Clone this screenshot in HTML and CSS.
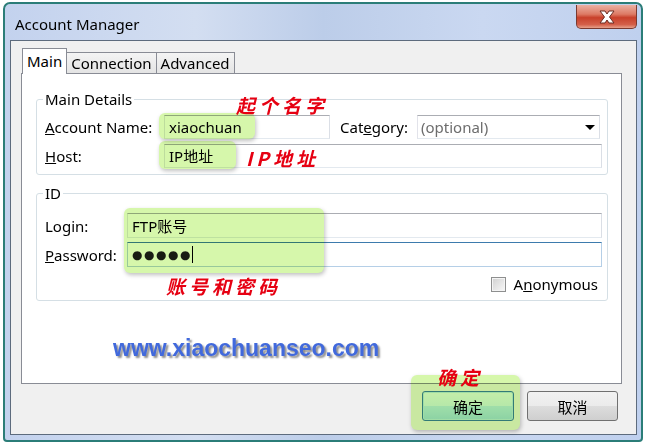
FILE: index.html
```html
<!DOCTYPE html>
<html>
    <head>
        <meta charset="UTF-8">
        <title>Account Manager</title>
        <link rel="stylesheet" href="styles.css">
    </head>
    <body>
        <div class="window">
            <div class="titlebar">
                <span class="title">Account Manager</span>
                <button class="close" title="Close">
                    <svg width="22" height="16" viewBox="0 0 22 16">
                        <path d="M4 2 L9 2 L11 5 L13 2 L18 2 L13.5 8 L18 14 L13 14 L11 11 L9 14 L4 14 L8.5 8 Z" fill="#fff" stroke="#6b2c22" stroke-width="1" stroke-linejoin="round"/>
                    </svg>
                </button>
            </div>

            <div class="client">
                <div class="tabs">
                    <span class="tab active">Main</span>
                    <span class="tab">Connection</span>
                    <span class="tab">Advanced</span>
                </div>

                <div class="panel">
                    <fieldset class="group main-group">
                        <legend>Main Details</legend>
                        <div class="row">
                            <label class="lbl"><u>A</u>ccount Name:</label>
                            <div class="field name-field">xiaochuan</div>
                            <label class="lbl cat-lbl">Cat<u>e</u>gory:</label>
                            <div class="field select">
                                <span class="placeholder">(optional)</span>
                                <span class="arrow"></span>
                            </div>
                        </div>
                        <div class="row">
                            <label class="lbl"><u>H</u>ost:</label>
                            <div class="field grow">IP地址</div>
                        </div>
                    </fieldset>

                    <fieldset class="group id-group">
                        <legend>ID</legend>
                        <div class="row">
                            <label class="lbl">Login:</label>
                            <div class="field grow">FTP账号</div>
                        </div>
                        <div class="row">
                            <label class="lbl"><u>P</u>assword:</label>
                            <div class="field grow focused"><span class="dots">●●●●●</span><span class="caret"></span></div>
                        </div>
                        <div class="check-row">
                            <span class="checkbox"></span>
                            <label>A<u>n</u>onymous</label>
                        </div>
                    </fieldset>

                    <div class="watermark">www.xiaochuanseo.com</div>
                </div>

                <div class="buttons">
                    <button class="btn default">确定</button>
                    <button class="btn">取消</button>
                </div>
            </div>
        </div>

        <!-- highlight marks and notes drawn over the dialog -->
        <div class="mark mark-name"></div>
        <div class="mark mark-host"></div>
        <div class="mark mark-login"></div>
        <div class="mark mark-ok"></div>

        <span class="note note-name">起个名字</span>
        <span class="note note-ip">IP地址</span>
        <span class="note note-acct">账号和密码</span>
        <span class="note note-ok">确定</span>
    </body>
</html>
```

FILE: styles.css
```css
body {
    margin: 0;
    width: 649px;
    height: 448px;
    position: relative;
    overflow: hidden;
    background: #fff;
    font-family: "Noto Sans", "Noto Sans CJK SC", sans-serif;
    font-size: 15px;
    color: #000;
}

.window {
    margin: 2px 0 0 3px;
    width: 640px;
    height: 440px;
    box-sizing: border-box;
    border: 2px solid #2b7d78;
    border-radius: 7px 7px 4px 4px;
    padding: 0 4px 5px 5px;
    display: flex;
    flex-direction: column;
    background: linear-gradient(to right, #c3d2ee 0%, #d3def1 30%, #bccde9 50%, #cad8f1 75%, #bfd0ee 100%);
}

.titlebar {
    height: 36px;
    flex: none;
    display: flex;
    justify-content: space-between;
    align-items: flex-start;
}

.title {
    margin: 10px 0 0 5px;
    line-height: 20px;
}

.close {
    margin-top: 1px;
    width: 61px;
    height: 24px;
    padding: 0;
    border: 1px solid #7a3a30;
    border-top: none;
    border-radius: 0 0 5px 5px;
    background: linear-gradient(#eab0a2 0%, #dd7a64 40%, #c8402a 55%, #d4604a 85%, #e7a08a 100%);
    display: flex;
    align-items: center;
    justify-content: center;
}

.client {
    flex: 1;
    border: 1px solid #5d6b7d;
    background: #f0f0f0;
    display: flex;
    flex-direction: column;
}

.tabs {
    height: 32px;
    box-sizing: border-box;
    padding: 7px 0 0 11px;
    display: flex;
    align-items: flex-end;
}

.tab {
    height: 20px;
    line-height: 20px;
    padding: 0 4px;
    border: 1px solid #898c95;
    border-bottom: none;
    margin-left: -1px;
    background: linear-gradient(#f4f4f4, #e4e4e4);
}

.tab.active {
    height: 25px;
    line-height: 25px;
    margin: 0 0 -1px 0;
    background: #fff;
    position: relative;
    z-index: 1;
}

.panel {
    margin-left: 10px;
    width: 601px;
    height: 311px;
    box-sizing: border-box;
    border: 1px solid #898c95;
    background: #fff;
    padding: 16px 0 0 14px;
}

.group {
    width: 572px;
    min-width: 0;
    box-sizing: border-box;
    margin: 0;
    border: 1px solid #d5dfe5;
    border-radius: 3px;
}

.group legend {
    padding: 0 2px;
    margin-left: -2px;
    line-height: 18px;
}

.main-group {
    padding: 7px 5px 6px 8px;
}

.id-group {
    margin-top: 9px;
    padding: 11px 5px 8px 8px;
}

.row {
    display: flex;
    align-items: center;
    height: 24px;
}

.row + .row {
    margin-top: 5px;
}

.id-group .row {
    height: 25px;
}

.id-group .row + .row {
    margin-top: 4px;
}

.lbl {
    width: 119px;
    flex: none;
}

.id-group .lbl {
    width: 82px;
}

.cat-lbl {
    width: 77px;
    margin-left: 10px;
}

.field {
    height: 100%;
    box-sizing: border-box;
    border: 1px solid;
    border-color: #abadb3 #dbdfe6 #e3e9ef #e2e3ea;
    padding: 0 4px;
    line-height: 22px;
    background: #fff;
    display: flex;
    align-items: center;
}

.name-field {
    width: 166px;
}

.grow {
    flex: 1;
}

.select {
    width: 183px;
    justify-content: space-between;
    padding: 0 4px 0 3px;
}

.placeholder {
    color: #6d6d6d;
}

.arrow {
    width: 0;
    height: 0;
    border-left: 5px solid transparent;
    border-right: 5px solid transparent;
    border-top: 5px solid #000;
}

.focused {
    border-color: #3d7bad #b5cfe7 #b5cfe7 #b5cfe7;
}

.dots {
    font-family: "DejaVu Sans", sans-serif;
    font-size: 12px;
    letter-spacing: 1.5px;
    color: #1c1c1c;
}

.caret {
    width: 1px;
    height: 17px;
    margin-left: 0;
    background: #000;
}

.check-row {
    margin-top: 9px;
    height: 16px;
    padding-right: 4px;
    display: flex;
    justify-content: flex-end;
    align-items: center;
    gap: 8px;
}

.checkbox {
    width: 13px;
    height: 13px;
    border: 1px solid #8e8f8f;
    background: linear-gradient(135deg, #d0d0d0, #f8f8f8);
    box-shadow: inset 0 0 0 1px #f4f4f4;
}

.watermark {
    margin: 33px 0 0 77px;
    font-family: "Liberation Sans", Arial, sans-serif;
    font-weight: bold;
    font-size: 23px;
    line-height: 29px;
    color: #4169dc;
    text-shadow: 2px 2px 2px rgba(0, 0, 0, 0.45);
}

.buttons {
    display: flex;
    justify-content: flex-end;
    gap: 13px;
    padding: 7px 18px 0 0;
}

.btn {
    width: 91px;
    height: 30px;
    border: 1px solid #707070;
    border-radius: 3px;
    font-family: "Noto Sans CJK SC", sans-serif;
    font-size: 15px;
    color: #000;
    background: linear-gradient(#f2f2f2 0%, #ebebeb 50%, #dddddd 50%, #cfcfcf 100%);
}

.btn.default {
    width: 92px;
    border-color: #3c7fb1;
    box-shadow: inset 0 0 0 1px #bfe5f7;
    background: linear-gradient(#eaf6fd 0%, #d9f0fc 50%, #bee6fd 50%, #a7d9f5 100%);
}

.mark {
    position: absolute;
    background: #d6f7ab;
    mix-blend-mode: multiply;
    border-radius: 6px;
    box-shadow: 1px 2px 4px rgba(0, 0, 0, 0.25);
}

.mark-name {
    left: 159px;
    top: 113px;
    width: 96px;
    height: 26px;
}

.mark-host {
    left: 159px;
    top: 141px;
    width: 77px;
    height: 28px;
}

.mark-login {
    left: 124px;
    top: 208px;
    width: 200px;
    height: 65px;
}

.mark-ok {
    left: 411px;
    top: 375px;
    width: 109px;
    height: 55px;
}

.note {
    position: absolute;
    font-family: "Noto Sans CJK SC", sans-serif;
    font-weight: bold;
    font-size: 19px;
    line-height: 22px;
    letter-spacing: 4px;
    color: #e60012;
    font-style: italic;
}

.note-name {
    left: 236px;
    top: 94px;
}

.note-ip {
    left: 246px;
    top: 147px;
}

.note-acct {
    left: 166px;
    top: 275px;
}

.note-ok {
    left: 437px;
    top: 366px;
}
```
